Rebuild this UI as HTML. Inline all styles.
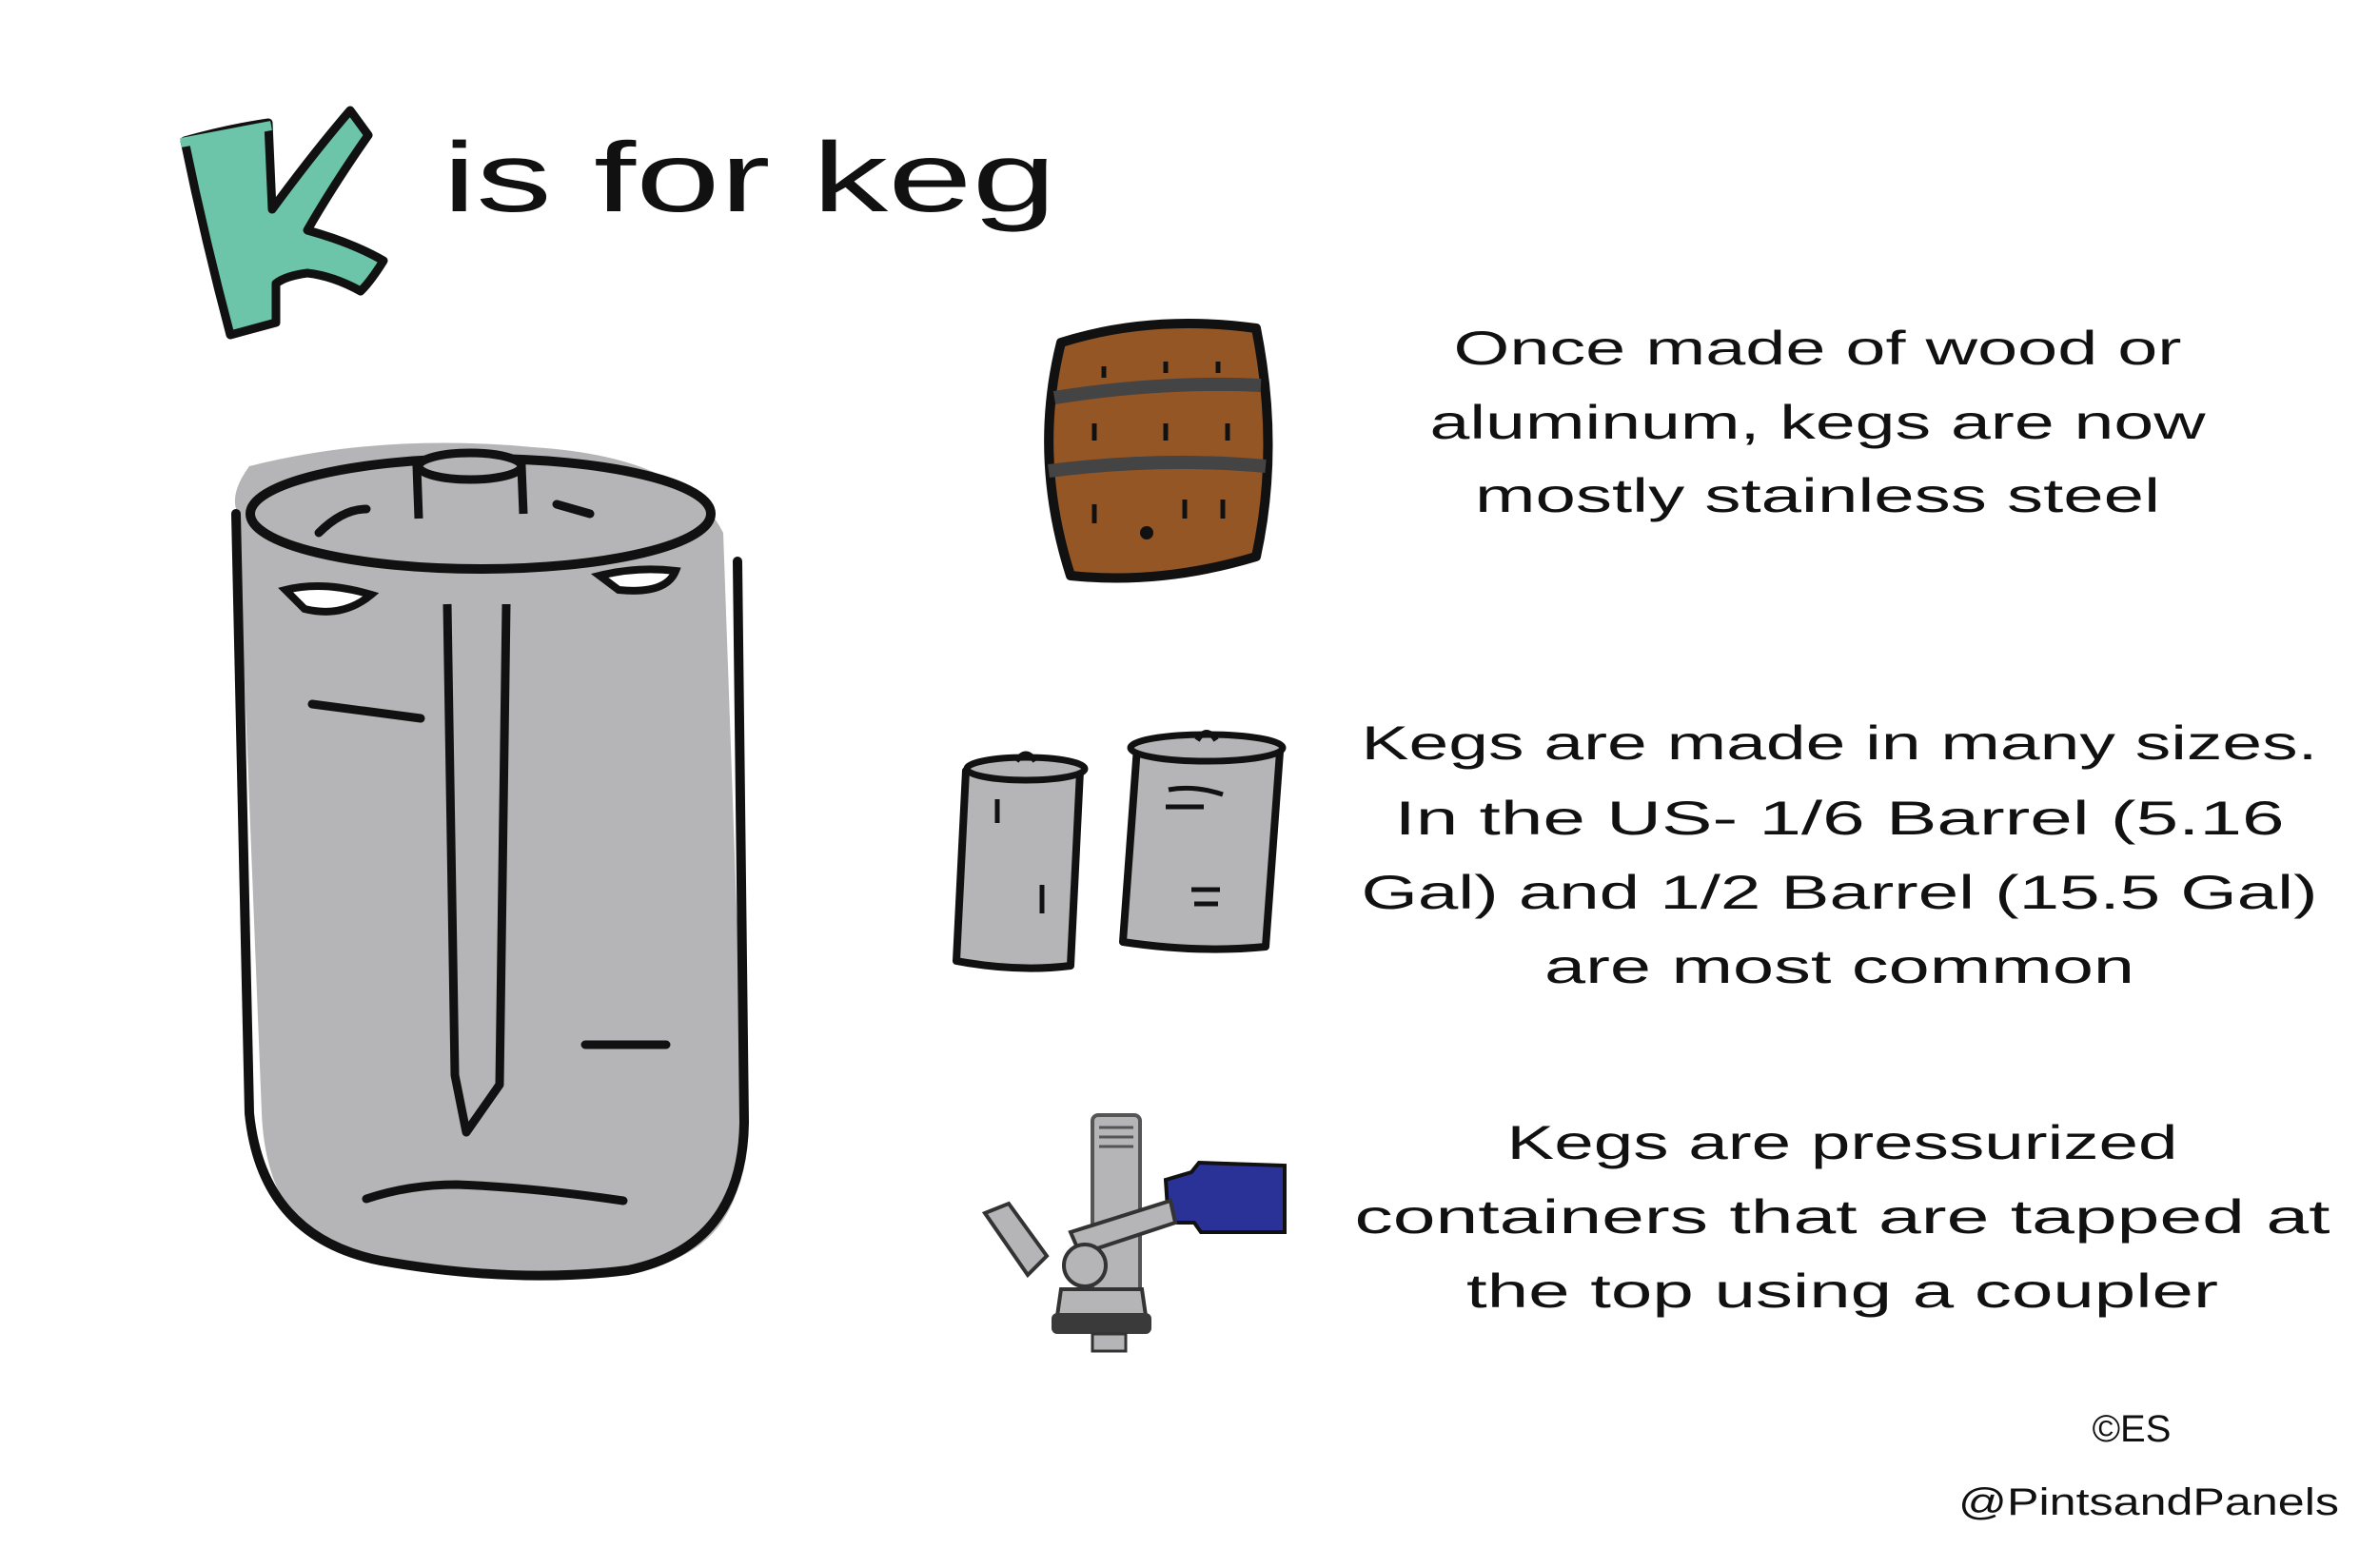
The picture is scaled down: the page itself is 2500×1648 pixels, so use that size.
<!DOCTYPE html>
<html><head><meta charset="utf-8"><style>
html,body{margin:0;padding:0;background:#fff;}
svg{display:block;}
text{font-family:"Liberation Sans",sans-serif;fill:#111;}
</style></head><body>
<svg width="2500" height="1648" viewBox="0 0 2500 1648" xmlns="http://www.w3.org/2000/svg">
<rect width="2500" height="1648" fill="#fff"/>
<!-- K letter -->
<path d="M194 148 Q240 135 282 129 L286 220 Q330 160 368 116 L387 142 Q350 195 323 242 Q370 255 403 274 Q390 295 379 306 Q350 290 323 287 Q300 290 290 298 L290 339 L242 352 Q215 250 194 148 Z" fill="#6cc4a9" stroke="#111" stroke-width="9" stroke-linejoin="round"/>
<path d="M190 150 L285 132" stroke="#6cc4a9" stroke-width="10"/>
<text x="465" y="222" font-size="104" textLength="645" lengthAdjust="spacingAndGlyphs">is for keg</text>
<!-- big keg -->
<path d="M250 540 Q240 520 262 490 Q400 455 560 470 Q720 480 760 560 L782 1180 Q790 1330 640 1338 Q470 1345 370 1320 Q280 1290 275 1170 Z" fill="#b5b5b7"/>
<path d="M248 540 L262 1170 Q275 1300 400 1325 Q540 1350 660 1335 Q780 1310 782 1180 L775 590" fill="none" stroke="#111" stroke-width="10" stroke-linecap="round"/>
<ellipse cx="505" cy="540" rx="242" ry="58" fill="#b5b5b7" stroke="#111" stroke-width="10"/>
<path d="M440 545 L438 490 Q505 470 548 490 L550 540" fill="#b5b5b7" stroke="#111" stroke-width="9"/>
<ellipse cx="494" cy="490" rx="54" ry="14" fill="#b5b5b7" stroke="#111" stroke-width="9"/>
<path d="M335 560 Q360 535 385 535 M585 530 L620 540" stroke="#111" stroke-width="9" fill="none" stroke-linecap="round"/>
<path d="M300 620 Q340 610 390 625 Q360 650 320 640 Z M630 605 Q670 595 710 600 Q700 625 650 620 Z" fill="#fff" stroke="#111" stroke-width="8"/>
<path d="M470 635 L478 1130 L490 1190 L525 1140 L532 635" fill="none" stroke="#111" stroke-width="9" stroke-linejoin="round"/>
<path d="M328 740 L442 755 M615 1098 L700 1098 M385 1260 Q430 1245 480 1245 Q560 1248 655 1262" stroke="#111" stroke-width="9" fill="none" stroke-linecap="round"/>
<!-- barrel -->
<path d="M1115 360 Q1210 330 1320 345 Q1345 470 1320 585 Q1220 615 1125 605 Q1085 480 1115 360 Z" fill="#955626" stroke="#111" stroke-width="10" stroke-linejoin="round"/>
<path d="M1108 418 Q1220 400 1325 405 M1102 495 Q1220 480 1330 490" stroke="#444" stroke-width="14" fill="none"/>
<path d="M1160 385 l0 12 M1225 380 l0 12 M1280 380 l0 12 M1150 445 l0 18 M1225 445 l0 18 M1290 445 l0 18 M1150 530 l0 20 M1245 525 l0 20 M1285 525 l0 20" stroke="#111" stroke-width="5"/>
<circle cx="1205" cy="560" r="7" fill="#111"/>
<g font-size="50">
<text x="1910" y="383" text-anchor="middle" textLength="765" lengthAdjust="spacingAndGlyphs">Once made of wood or</text>
<text x="1910" y="461" text-anchor="middle" textLength="815" lengthAdjust="spacingAndGlyphs">aluminum, kegs are now</text>
<text x="1910" y="538" text-anchor="middle" textLength="720" lengthAdjust="spacingAndGlyphs">mostly stainless steel</text>
<text x="1933" y="798" text-anchor="middle" textLength="1005" lengthAdjust="spacingAndGlyphs">Kegs are made in many sizes.</text>
<text x="1933" y="877" text-anchor="middle" textLength="935" lengthAdjust="spacingAndGlyphs">In the US- 1/6 Barrel (5.16</text>
<text x="1933" y="955" text-anchor="middle" textLength="1005" lengthAdjust="spacingAndGlyphs">Gal) and 1/2 Barrel (15.5 Gal)</text>
<text x="1933" y="1033" text-anchor="middle" textLength="620" lengthAdjust="spacingAndGlyphs">are most common</text>
<text x="1936" y="1218" text-anchor="middle" textLength="705" lengthAdjust="spacingAndGlyphs">Kegs are pressurized</text>
<text x="1936" y="1296" text-anchor="middle" textLength="1025" lengthAdjust="spacingAndGlyphs">containers that are tapped at</text>
<text x="1936" y="1374" text-anchor="middle" textLength="790" lengthAdjust="spacingAndGlyphs">the top using a coupler</text>
</g>
<!-- small kegs -->
<path d="M1015 810 L1005 1010 Q1070 1022 1125 1015 L1135 810 Z" fill="#b5b5b7" stroke="#111" stroke-width="8" stroke-linejoin="round"/>
<ellipse cx="1078" cy="808" rx="62" ry="12" fill="#b5b5b7" stroke="#111" stroke-width="7"/>
<path d="M1068 800 Q1078 785 1088 800" fill="none" stroke="#111" stroke-width="6"/>
<path d="M1048 840 l0 25 M1095 930 l0 30" stroke="#111" stroke-width="5"/>
<path d="M1195 785 L1180 990 Q1260 1002 1330 995 L1345 790 Z" fill="#b5b5b7" stroke="#111" stroke-width="8" stroke-linejoin="round"/>
<ellipse cx="1268" cy="786" rx="80" ry="14" fill="#b5b5b7" stroke="#111" stroke-width="7"/>
<path d="M1258 778 Q1268 762 1278 778" fill="none" stroke="#111" stroke-width="6"/>
<path d="M1228 830 Q1255 825 1285 835 M1225 848 l40 0 M1252 935 l30 0 M1255 950 l25 0" stroke="#111" stroke-width="5" fill="none"/>
<!-- coupler -->
<rect x="1148" y="1172" width="50" height="190" rx="6" fill="#b5b5b7" stroke="#555" stroke-width="4"/>
<path d="M1155 1185 l36 0 M1155 1195 l36 0 M1155 1205 l36 0" stroke="#555" stroke-width="3"/>
<path d="M1225 1240 L1252 1232 L1260 1222 L1350 1225 L1350 1295 L1262 1295 L1255 1285 L1228 1285 Z" fill="#2a3197" stroke="#111" stroke-width="4"/>
<path d="M1125 1295 L1230 1262 L1235 1285 L1135 1318 Z" fill="#b5b5b7" stroke="#333" stroke-width="4"/>
<path d="M1035 1275 L1060 1265 L1100 1320 L1080 1340 Z" fill="#b5b5b7" stroke="#333" stroke-width="4"/>
<circle cx="1140" cy="1330" r="22" fill="#b5b5b7" stroke="#333" stroke-width="4"/>
<path d="M1115 1355 L1200 1355 L1205 1390 L1110 1390 Z" fill="#b5b5b7" stroke="#333" stroke-width="4"/>
<rect x="1105" y="1380" width="105" height="22" rx="6" fill="#3a3a3a"/>
<rect x="1148" y="1402" width="35" height="18" fill="#b5b5b7" stroke="#333" stroke-width="3"/>
<text x="2240" y="1515" font-size="40" text-anchor="middle">©ES</text>
<text x="2058" y="1592" font-size="40" textLength="400" lengthAdjust="spacingAndGlyphs">@PintsandPanels</text>
</svg>
</body></html>
